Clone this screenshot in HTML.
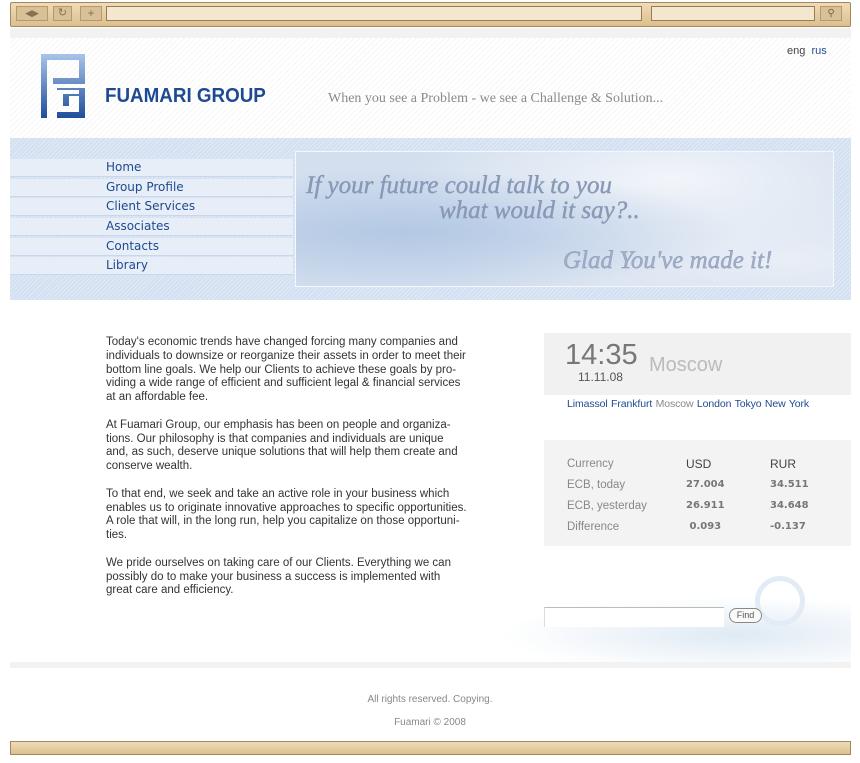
<!DOCTYPE html>
<html><head><meta charset="utf-8"><style>
*{margin:0;padding:0;box-sizing:border-box}
body{width:860px;height:763px;background:#fff;font-family:"Liberation Sans",Arial,sans-serif;position:relative;overflow:hidden}
.abs{position:absolute}
.tan{background:linear-gradient(#eedcb8,#dcc08f);border:1px solid #a6865a}
.hatch{background:repeating-linear-gradient(135deg,#fff 0 3px,#f6f6f6 3px 4px)}
.bhatch{background:repeating-linear-gradient(135deg,#d3e0f1 0 2px,#e2eaf6 2px 3px)}
.nav a{display:block;height:18px;margin-bottom:1.7px;background:#e7eef8;border-bottom:1px solid #c8d7ec;color:#1d4a8e;font-family:"DejaVu Sans",Verdana,sans-serif;font-size:12px;padding-left:96px;line-height:17px;text-decoration:none}
p{font-size:11.5px;line-height:13.8px;color:#333;margin-bottom:13.8px}
.cur td{font-size:11.5px;color:#888;height:21px}
.cur td.b{font-weight:bold;color:#777;font-size:10px;font-family:"DejaVu Sans",sans-serif}
</style></head><body>
<div class="abs tan" style="left:10px;top:2px;width:841px;height:25px;border-radius:2px"></div>
<div class="abs" style="left:16px;top:6px;width:32px;height:15px;background:#d8c199;border:1px solid #b89a6a;font-size:9px;color:#8a7050;text-align:center;line-height:13px">◀▶</div>
<div class="abs" style="left:53px;top:6px;width:19px;height:15px;background:#d8c199;border:1px solid #b89a6a;font-size:11px;color:#8a7050;text-align:center;line-height:13px">↻</div>
<div class="abs" style="left:80px;top:6px;width:22px;height:15px;background:#d8c199;border:1px solid #b89a6a;font-size:12px;color:#8a7050;text-align:center;line-height:13px">+</div>
<div class="abs" style="left:106px;top:6px;width:536px;height:15px;background:#f3e7d0;border:1px solid #9a7c50"></div>
<div class="abs" style="left:651px;top:6px;width:164px;height:15px;background:#f3e7d0;border:1px solid #9a7c50"></div>
<div class="abs" style="left:820px;top:6px;width:22px;height:15px;background:#d8c199;border:1px solid #b89a6a;font-size:10px;color:#7a6040;text-align:center;line-height:13px">⚲</div>

<div class="abs" style="left:10px;top:28px;width:841px;height:10px;background:#f2f2f2"></div>
<div class="abs hatch" style="left:10px;top:38px;width:841px;height:100px"></div>
<svg class="abs" style="left:41px;top:54px" width="44" height="64" viewBox="0 0 44 64"><defs><linearGradient id="g" x1="0" y1="0" x2="0" y2="1"><stop offset="0" stop-color="#a8c4ea"/><stop offset="1" stop-color="#1f4d9a"/></linearGradient></defs>
<path fill="url(#g)" d="M0 0H44V30H12V24H38V6H6V64H0Z M16 34H44V64H16V58H38V42H28V52H22V40H38V36H16Z"/></svg>
<div class="abs" style="left:105px;top:85px;font-size:20px;font-weight:bold;color:#1d4a92;font-family:'Liberation Sans',sans-serif;transform:scaleX(0.94);transform-origin:left;white-space:nowrap">FUAMARI GROUP</div>
<div class="abs" style="left:328px;top:91px;font-size:14px;color:#8a8a8a;font-family:'Liberation Serif',serif">When you see a Problem - we see a Challenge &amp; Solution...</div>
<div class="abs" style="left:787px;top:45px;font-size:11px;color:#444">eng&nbsp;&nbsp;<span style="color:#1d4a92">rus</span></div>

<div class="abs bhatch" style="left:10px;top:138px;width:841px;height:162px"></div>
<div class="abs nav" style="left:10px;top:159px;width:283px">
<a>Home</a><a>Group Profile</a><a>Client Services</a><a>Associates</a><a>Contacts</a><a>Library</a></div>
<div class="abs" style="left:295px;top:151px;width:539px;height:136px;border:1px solid #f4f7fb;background:radial-gradient(ellipse at 20% 60%,#b3c8e4,transparent 55%),radial-gradient(ellipse at 70% 20%,#f2f5fa,transparent 50%),radial-gradient(ellipse at 90% 80%,#e9eef6,transparent 50%),#d3dfee;font-family:'Liberation Serif',serif;font-style:italic;color:#8898b6;-webkit-text-stroke:0.4px #8898b6">
<div class="abs" style="left:10px;top:20px;font-size:25px">If your future could talk to you</div>
<div class="abs" style="left:143px;top:45px;font-size:25px">what would it say?..</div>
<div class="abs" style="left:267px;top:95px;font-size:25px;color:#a0aec6">Glad You've made it!</div>
</div>

<div class="abs" style="left:106px;top:336px;width:362px">
<p>Today's economic trends have changed forcing many companies and individuals to downsize or reorganize their assets in order to meet their bottom line goals. We help our Clients to achieve these goals by pro­viding a wide range of efficient and sufficient legal &amp; financial services at an affordable fee.</p>
<p>At Fuamari Group, our emphasis has been on people and organiza­tions. Our philosophy is that companies and individuals are unique and, as such, deserve unique solutions that will help them create and conserve wealth.</p>
<p>To that end, we seek and take an active role in your business which enables us to originate innovative approaches to specific opportunities. A role that will, in the long run, help you capitalize on those opportuni­ties.</p>
<p>We pride ourselves on taking care of our Clients. Everything we can possibly do to make your business a success is implemented with great care and efficiency.</p>
</div>

<div class="abs" style="left:544px;top:333px;width:307px;height:62px;background:#f1f1f1"></div>
<div class="abs" style="left:565px;top:339px;font-size:29px;color:#777">14:35</div>
<div class="abs" style="left:578px;top:370px;font-size:12px;color:#555">11.11.08</div>
<div class="abs" style="left:649px;top:354px;font-size:20px;color:#bbb">Moscow</div>
<div class="abs" style="left:567px;top:398px;font-size:10.5px;color:#1d4a92;word-spacing:0.6px;letter-spacing:-0.1px">Limassol Frankfurt <span style="color:#888">Moscow</span> London Tokyo New York</div>
<div class="abs" style="left:544px;top:440px;width:307px;height:106px;background:#f3f3f3"></div>
<table class="abs cur" style="left:567px;top:453px;border-collapse:collapse">
<tr><td style="width:119px">Currency</td><td style="width:84px;color:#444;font-size:12px">USD</td><td style="color:#444;font-size:12px">RUR</td></tr>
<tr><td>ECB, today</td><td class="b">27.004</td><td class="b">34.511</td></tr>
<tr><td>ECB, yesterday</td><td class="b">26.911</td><td class="b">34.648</td></tr>
<tr><td>Difference</td><td class="b">&nbsp;0.093</td><td class="b">-0.137</td></tr>
</table>
<div class="abs" style="left:460px;top:590px;width:391px;height:75px;background:radial-gradient(ellipse at 70% 60%,#dfeaf4,transparent 60%)"></div>
<div class="abs" style="left:755px;top:576px;width:50px;height:50px;border:5px solid #e3ecf6;border-radius:50%"></div>
<div class="abs" style="left:544px;top:607px;width:180px;height:20px;border-top:1px solid #bbb;border-left:1px solid #ddd;background:#fff"></div>
<div class="abs" style="left:729px;top:608px;width:33px;height:15px;border:1px solid #888;border-radius:8px;font-size:9px;color:#555;text-align:center;line-height:13px;background:#fafafa">Find</div>

<div class="abs" style="left:10px;top:662px;width:841px;height:6px;background:#f2f2f2"></div>
<div class="abs" style="left:0;top:694px;width:860px;text-align:center;font-size:10px;color:#888">All rights reserved. Copying.</div>
<div class="abs" style="left:0;top:717px;width:860px;text-align:center;font-size:10px;color:#888">Fuamari © 2008</div>
<div class="abs tan" style="left:10px;top:741px;width:841px;height:14px"></div>
</body></html>
